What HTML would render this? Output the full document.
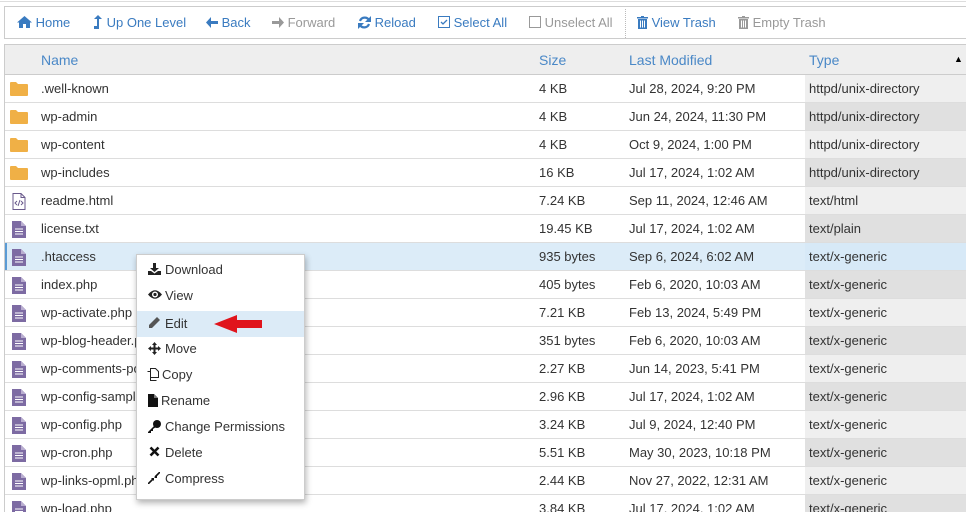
<!DOCTYPE html>
<html><head><meta charset="utf-8"><style>
*{margin:0;padding:0;box-sizing:border-box}
html,body{width:966px;height:512px;overflow:hidden}
body{background:#fff;font-family:"Liberation Sans",Arial,sans-serif;font-size:13px;color:#333;position:relative}
.tb{position:absolute;left:4px;top:6px;width:970px;height:33px;border:1px solid #ccc;background:#fff}
.tb span{position:absolute;top:8px;font-size:13px;color:#3a7bc0;white-space:nowrap}
.tb span.d{color:#999}
.sep{position:absolute;left:620px;top:2px;height:29px;border-left:1px dotted #bbb}
.topline{position:absolute;left:0;top:0;width:966px;height:2px;border-bottom:1px solid #ddd}
.tbl{position:absolute;left:4px;top:44px;width:970px;border-left:1px solid #ccc;border-top:1px solid #ccc}
.hd{height:30px;background:#eee;position:relative;border-bottom:1px solid #ccc;color:#4a88c7;font-size:14px}
.hd span{position:absolute;top:7px}
.row{height:28px;position:relative;border-bottom:1px solid #ddd}
.row span{position:absolute;top:6px;white-space:nowrap}
.row .ty{position:absolute;left:800px;top:0;width:170px;height:27px;background:#efefef}
.row.o .ty{background:#e0e0e0}
.row.sel{background:#dcecf8;box-shadow:inset 2px 0 0 #5a9bd5}
.row.sel .ty{background:#d7e9f7}
.ic{position:absolute;left:5px;top:6px}
.menu{position:absolute;left:136px;top:254px;width:169px;height:246px;background:#fff;border:1px solid #ccc;box-shadow:1px 3px 6px rgba(0,0,0,.3)}
.mi{position:absolute;left:0;width:167px;height:26px;font-size:13px;color:#333}
.mi span{position:absolute;left:28px;top:5px}
.mi svg{position:absolute;left:11px;top:6px}
.mi.h{background:#dcebf7}
</style></head><body>
<div class="topline"></div>
<div class="tb">
<span style="left:12px"><svg width="15" height="12" viewBox="0 0 15 12" style="vertical-align:-1px"><path d="M7.5 0L0 6.5h2V12h4V8h3v4h4V6.5h2z" fill="#3a7bc0"/></svg> Home</span>
<span style="left:88px"><svg width="10" height="14" viewBox="0 0 10 14" style="vertical-align:-2px"><path d="M5 0L1 4h3v7H1v3h5V4h3z" fill="#3a7bc0"/></svg> Up One Level</span>
<span style="left:201px"><svg width="12" height="11" viewBox="0 0 12 11" style="vertical-align:-1px"><path d="M5 0L0 5.5 5 11V7h7V4H5z" fill="#3a7bc0"/></svg> Back</span>
<span class="d" style="left:267px"><svg width="12" height="11" viewBox="0 0 12 11" style="vertical-align:-1px"><path d="M7 0l5 5.5L7 11V7H0V4h7z" fill="#999"/></svg> Forward</span>
<span style="left:353px"><svg width="13" height="13" viewBox="0 0 13 13" style="vertical-align:-2px"><path d="M11 4A5 5 0 0 0 2 5M2 9a5 5 0 0 0 9-1" stroke="#3a7bc0" stroke-width="2.2" fill="none"/><path d="M13 0v6H7zM0 13V7h6z" fill="#3a7bc0"/></svg> Reload</span>
<span style="left:433px"><svg width="12" height="12" viewBox="0 0 12 12" style="vertical-align:-1px"><rect x=".5" y=".5" width="11" height="11" fill="none" stroke="#3a7bc0"/><path d="M3 6l2 2 4-4" stroke="#3a7bc0" fill="none" stroke-width="1.3"/></svg> Select All</span>
<span class="d" style="left:524px"><svg width="12" height="12" viewBox="0 0 12 12" style="vertical-align:-1px"><rect x=".5" y=".5" width="11" height="11" fill="none" stroke="#999"/></svg> Unselect All</span>
<div class="sep"></div>
<span style="left:632px"><svg width="11" height="13" viewBox="0 0 11 13" style="vertical-align:-2px"><path d="M0 1h11v1.5H0zM4 0h3v1H4zM1 3h9v10H1z" fill="#3a7bc0"/><path d="M3.5 4.5v7M5.5 4.5v7M7.5 4.5v7" stroke="#fff"/></svg> View Trash</span>
<span class="d" style="left:733px"><svg width="11" height="13" viewBox="0 0 11 13" style="vertical-align:-2px"><path d="M0 1h11v1.5H0zM4 0h3v1H4zM1 3h9v10H1z" fill="#999"/><path d="M3.5 4.5v7M5.5 4.5v7M7.5 4.5v7" stroke="#fff"/></svg> Empty Trash</span>
</div>
<div class="tbl">
<div class="hd"><span style="left:36px">Name</span><span style="left:534px">Size</span><span style="left:624px">Last Modified</span><span style="left:804px">Type</span><span style="left:949px;top:9px;font-size:9px;color:#000">▲</span></div>
<div id="rows"></div>
</div>
<script>
var d=[["f",".well-known","4 KB","Jul 28, 2024, 9:20 PM","httpd/unix-directory"],["f","wp-admin","4 KB","Jun 24, 2024, 11:30 PM","httpd/unix-directory"],["f","wp-content","4 KB","Oct 9, 2024, 1:00 PM","httpd/unix-directory"],["f","wp-includes","16 KB","Jul 17, 2024, 1:02 AM","httpd/unix-directory"],["h","readme.html","7.24 KB","Sep 11, 2024, 12:46 AM","text/html"],["t","license.txt","19.45 KB","Jul 17, 2024, 1:02 AM","text/plain"],["t",".htaccess","935 bytes","Sep 6, 2024, 6:02 AM","text/x-generic"],["t","index.php","405 bytes","Feb 6, 2020, 10:03 AM","text/x-generic"],["t","wp-activate.php","7.21 KB","Feb 13, 2024, 5:49 PM","text/x-generic"],["t","wp-blog-header.php","351 bytes","Feb 6, 2020, 10:03 AM","text/x-generic"],["t","wp-comments-post.php","2.27 KB","Jun 14, 2023, 5:41 PM","text/x-generic"],["t","wp-config-sample.php","2.96 KB","Jul 17, 2024, 1:02 AM","text/x-generic"],["t","wp-config.php","3.24 KB","Jul 9, 2024, 12:40 PM","text/x-generic"],["t","wp-cron.php","5.51 KB","May 30, 2023, 10:18 PM","text/x-generic"],["t","wp-links-opml.php","2.44 KB","Nov 27, 2022, 12:31 AM","text/x-generic"],["t","wp-load.php","3.84 KB","Jul 17, 2024, 1:02 AM","text/x-generic"]];
var ic={f:'<svg class="ic" width="18" height="15" viewBox="0 0 18 15"><path d="M0 2a1 1 0 0 1 1-1h5l2 2h9a1 1 0 0 1 1 1v10a1 1 0 0 1-1 1H1a1 1 0 0 1-1-1z" fill="#f0b046"/></svg>',
h:'<svg class="ic" width="14" height="17" viewBox="0 0 14 17" style="left:7px"><path d="M1 .5h8l4 4v12H1z" fill="#fff" stroke="#6a5a8c"/><path d="M9 .5v4h4" fill="none" stroke="#6a5a8c"/><path d="M5 8l-2 2 2 2M9 8l2 2-2 2M8 7l-2 6" stroke="#6a5a8c" fill="none"/></svg>',
t:'<svg class="ic" width="14" height="17" viewBox="0 0 14 17" style="left:7px"><path d="M0 0h9l5 5v12H0z" fill="#7d6ba3"/><path d="M9 0v5h5" fill="#b9add0"/><path d="M3 8h8M3 10.5h8M3 13h8" stroke="#fff"/></svg>'};
var h="";d.forEach(function(r,i){h+='<div class="row'+(i%2?' o':'')+(i==6?' sel':'')+'"><div class="ty"></div>'+ic[r[0]]+'<span style="left:36px">'+r[1]+'</span><span style="left:534px">'+r[2]+'</span><span style="left:624px">'+r[3]+'</span><span style="left:804px">'+r[4]+'</span></div>'});
document.getElementById("rows").innerHTML=h;
</script>
<div class="menu">
<div class="mi" style="top:2px"><svg width="13" height="12" viewBox="0 0 13 12"><path d="M5 0h3v5h3L6.5 9 2 5h3z" fill="#222"/><path d="M0 8h3l3.5 2.5L10 8h3v4H0z" fill="#222"/></svg><span>Download</span></div>
<div class="mi" style="top:28px"><svg width="14" height="11" viewBox="0 0 14 11"><path d="M0 5.5Q7-3 14 5.5 7 14 0 5.5z" fill="#222"/><circle cx="7" cy="5.5" r="3" fill="#fff"/><circle cx="7" cy="5.5" r="1.6" fill="#222"/></svg><span>View</span></div>
<div class="mi h" style="top:56px"><svg width="12" height="12" viewBox="0 0 12 12"><path d="M9 0l3 3-8 8H1V8z" fill="#555"/></svg><span>Edit</span></div>
<div class="mi" style="top:81px"><svg width="13" height="13" viewBox="0 0 13 13"><path d="M6.5 0l2.5 3H7.5v2.5H10V4l3 2.5-3 2.5V7.5H7.5V10H9l-2.5 3L4 10h1.5V7.5H3V9L0 6.5 3 4v1.5h2.5V3H4z" fill="#222"/></svg><span>Move</span></div>
<div class="mi" style="top:107px"><svg width="12" height="13" viewBox="0 0 12 13" style="left:10px"><path d="M3.5 .5h5l3 3v6h-8z" fill="none" stroke="#222"/><path d="M.5 3.5h3v9h6" fill="none" stroke="#222"/></svg><span style="left:25px">Copy</span></div>
<div class="mi" style="top:133px"><svg width="10" height="13" viewBox="0 0 10 13"><path d="M0 0h6l4 4v9H0z" fill="#111"/><path d="M6 0v4h4" fill="#777"/></svg><span style="left:24px">Rename</span></div>
<div class="mi" style="top:159px"><svg width="13" height="13" viewBox="0 0 13 13"><circle cx="9" cy="4" r="4" fill="#111"/><path d="M6 6L0 12v1h3v-2h2v-2l3-2z" fill="#111"/></svg><span>Change Permissions</span></div>
<div class="mi" style="top:185px"><svg width="11" height="11" viewBox="0 0 11 11" style="left:12px"><path d="M1.5 1.5l8 8M9.5 1.5l-8 8" stroke="#111" stroke-width="2.6"/></svg><span>Delete</span></div>
<div class="mi" style="top:211px"><svg width="12" height="12" viewBox="0 0 12 12"><path d="M0 12l5-5M12 0L7 5" stroke="#111" stroke-width="1.6"/><path d="M3 6h3v3zM9 3v3H6z" fill="#111"/></svg><span>Compress</span></div>
</div>
<svg style="position:absolute;left:214px;top:313px" width="50" height="22" viewBox="0 0 50 22"><path d="M0 11L23 2v5h25v8H23v5z" fill="#e0141c"/></svg>
</body></html>
